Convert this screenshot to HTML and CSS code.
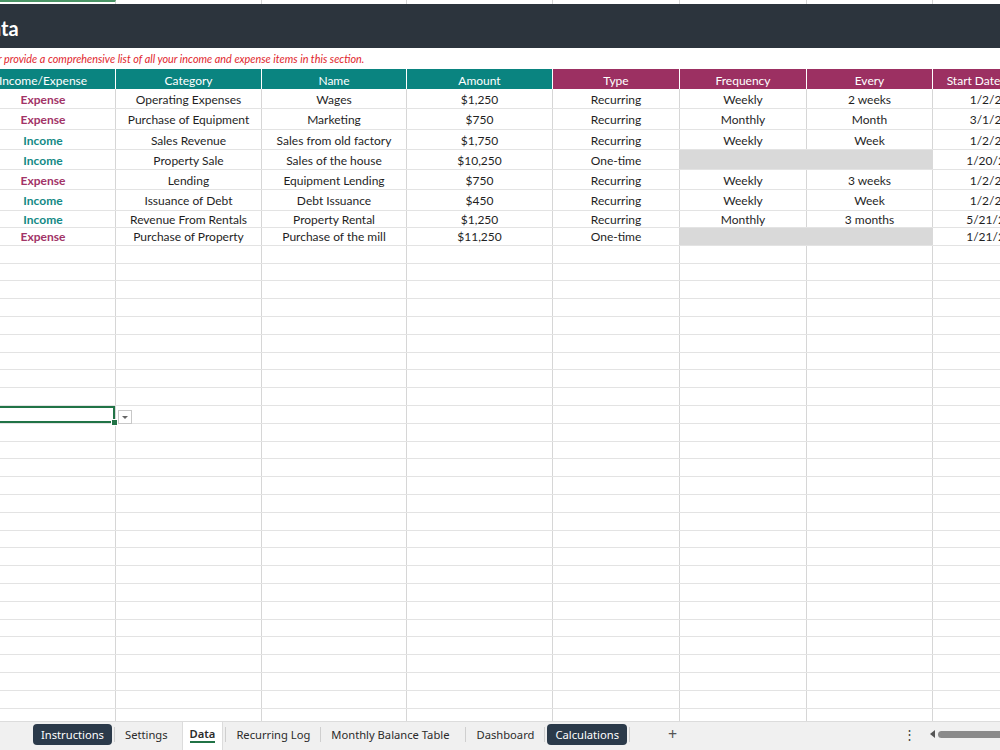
FILE: index.html
```html
<!DOCTYPE html>
<html lang="en">
<head>
  <meta charset="UTF-8" />
  <title>Data | Income &amp; Expense Tracker</title>
  <link rel="stylesheet" href="styles.css">
</head>
<body>
  <div class="sheet">
    <div class="row strip">
      <div class="cell picked"></div><div class="cell"></div><div class="cell"></div><div class="cell"></div>
      <div class="cell"></div><div class="cell"></div><div class="cell"></div><div class="cell"></div>
    </div>

    <div class="banner"><span class="title">Data</span></div>

    <div class="note">Enter or provide a comprehensive list of all your income and expense items in this section.</div>

    <div class="row head">
      <div class="cell teal">Income/Expense</div>
      <div class="cell teal">Category</div>
      <div class="cell teal">Name</div>
      <div class="cell teal">Amount</div>
      <div class="cell plum">Type</div>
      <div class="cell plum">Frequency</div>
      <div class="cell plum">Every</div>
      <div class="cell plum">Start Date of Entry</div>
    </div>

    <div class="row item">
      <div class="cell expense">Expense</div><div class="cell">Operating Expenses</div><div class="cell">Wages</div><div class="cell">$1,250</div>
      <div class="cell">Recurring</div><div class="cell">Weekly</div><div class="cell">2 weeks</div><div class="cell">1/2/2024</div>
    </div>
    <div class="row item">
      <div class="cell expense">Expense</div><div class="cell">Purchase of Equipment</div><div class="cell">Marketing</div><div class="cell">$750</div>
      <div class="cell">Recurring</div><div class="cell">Monthly</div><div class="cell">Month</div><div class="cell">3/1/2024</div>
    </div>
    <div class="row item">
      <div class="cell income">Income</div><div class="cell">Sales Revenue</div><div class="cell">Sales from old factory</div><div class="cell">$1,750</div>
      <div class="cell">Recurring</div><div class="cell">Weekly</div><div class="cell">Week</div><div class="cell">1/2/2024</div>
    </div>
    <div class="row item">
      <div class="cell income">Income</div><div class="cell">Property Sale</div><div class="cell">Sales of the house</div><div class="cell">$10,250</div>
      <div class="cell">One-time</div><div class="cell blank"></div><div class="cell blank"></div><div class="cell">1/20/2024</div>
    </div>
    <div class="row item">
      <div class="cell expense">Expense</div><div class="cell">Lending</div><div class="cell">Equipment Lending</div><div class="cell">$750</div>
      <div class="cell">Recurring</div><div class="cell">Weekly</div><div class="cell">3 weeks</div><div class="cell">1/2/2024</div>
    </div>
    <div class="row item">
      <div class="cell income">Income</div><div class="cell">Issuance of Debt</div><div class="cell">Debt Issuance</div><div class="cell">$450</div>
      <div class="cell">Recurring</div><div class="cell">Weekly</div><div class="cell">Week</div><div class="cell">1/2/2024</div>
    </div>
    <div class="row item short">
      <div class="cell income">Income</div><div class="cell">Revenue From Rentals</div><div class="cell">Property Rental</div><div class="cell">$1,250</div>
      <div class="cell">Recurring</div><div class="cell">Monthly</div><div class="cell">3 months</div><div class="cell">5/21/2024</div>
    </div>
    <div class="row item short">
      <div class="cell expense">Expense</div><div class="cell">Purchase of Property</div><div class="cell">Purchase of the mill</div><div class="cell">$11,250</div>
      <div class="cell">One-time</div><div class="cell blank"></div><div class="cell blank"></div><div class="cell">1/21/2024</div>
    </div>

    <div id="emptyRows"></div>
  </div>

  <div class="tabbar">
    <div class="tab dark">Instructions</div>
    <span class="sep"></span>
    <div class="tab">Settings</div>
    <div class="tab active"><span>Data</span></div>
    <span class="sep"></span>
    <div class="tab">Recurring Log</div>
    <span class="sep"></span>
    <div class="tab long">Monthly Balance Table</div>
    <span class="sep"></span>
    <div class="tab">Dashboard</div>
    <span class="sep"></span>
    <div class="tab dark">Calculations</div>
    <span class="sep"></span>
    <div class="add">+</div>
    <div class="scroll">
      <span class="more">&#8942;</span>
      <span class="arrow"></span>
      <span class="thumb"></span>
    </div>
  </div>

  <script>
    const holder = document.getElementById('emptyRows');
    for (let i = 0; i < 28; i++) {
      const row = document.createElement('div');
      row.className = 'row empty';
      for (let c = 0; c < 8; c++) {
        const cell = document.createElement('div');
        cell.className = 'cell';
        if (i === 9 && c === 0) {
          cell.className = 'cell selected';
          cell.innerHTML = '<span class="handle"></span><span class="drop"></span>';
        }
        row.appendChild(cell);
      }
      holder.appendChild(row);
    }
  </script>
</body>
</html>
```

FILE: styles.css
```css
html, body {
  margin: 0;
  height: 100%;
  overflow: hidden;
}

body {
  display: flex;
  flex-direction: column;
  background-color: #fff;
  color: #1f1f1f;
  font-family: Lato, "Liberation Sans", sans-serif;
}

.sheet {
  flex: 1;
  overflow: hidden;
  margin-left: -29px;
}

.row {
  display: grid;
  grid-template-columns: 145px 146px 145px 146px 127px 127px 126px 127px;
  border-bottom: 1px solid #e3e3e3;
  box-sizing: border-box;
}

.cell {
  border-right: 1px solid #d6d6d6;
  text-align: center;
  white-space: nowrap;
  overflow: hidden;
  font-size: 12px;
  position: relative;
}

.strip {
  height: 4px;
  border-bottom: none;
  background-color: #fff;
}

.strip .picked {
  border-top: 2px solid #4a9466;
}

.banner {
  height: 44px;
  background-color: #2c343d;
  display: flex;
  align-items: center;
}

.title {
  color: #fff;
  font-weight: 700;
  font-size: 20px;
  padding-left: 5px;
  padding-top: 3px;
}

.note {
  height: 21px;
  line-height: 21px;
  text-indent: -5px;
  color: #e1262d;
  font-size: 10.85px;
  font-style: italic;
  white-space: nowrap;
}

.head {
  height: 20px;
  line-height: 23px;
  border-bottom: none;
}

.head .cell {
  color: #fff;
  border-right: 1px solid #fff;
}

.teal {
  background-color: #0a8480;
}

.plum {
  background-color: #9c3062;
}

.item {
  height: 20.3px;
  line-height: 22px;
}

.item.short {
  height: 17.5px;
  line-height: 18.5px;
}

.expense {
  color: #a23467;
  font-weight: 700;
}

.income {
  color: #138985;
  font-weight: 700;
}

.blank {
  background-color: #d9d9d9;
  border-right-color: #d9d9d9;
}

.empty {
  height: 17.8px;
}

.selected {
  overflow: visible;
  box-shadow: inset 0 0 0 2px #217346;
}

.handle {
  position: absolute;
  right: -3px;
  bottom: -3px;
  width: 5px;
  height: 5px;
  background-color: #217346;
  border: 1px solid #fff;
  z-index: 2;
}

.drop {
  position: absolute;
  left: 147px;
  top: 4px;
  width: 14px;
  height: 14px;
  background-color: #fff;
  border: 1px solid #c8c8c8;
  box-sizing: border-box;
  z-index: 2;
}

.drop::after {
  content: "";
  position: absolute;
  left: 3px;
  top: 5px;
  border-left: 3px solid transparent;
  border-right: 3px solid transparent;
  border-top: 3px solid #666;
}

/* sheet tabs */
.tabbar {
  height: 29px;
  flex-shrink: 0;
  display: flex;
  align-items: center;
  background-color: #f0f0f0;
  border-top: 1px solid #dcdcdc;
  box-sizing: border-box;
  padding-left: 33px;
  padding-bottom: 4px;
  font-family: "Noto Sans", "Open Sans", sans-serif;
  font-size: 11.2px;
  color: #2b2b2b;
}

.tab {
  padding: 0 8px;
  height: 21px;
  line-height: 21px;
  white-space: nowrap;
}

.tab.long {
  padding-right: 14px;
}

.tab.dark {
  background-color: #2b3a4a;
  color: #fff;
  border-radius: 4px;
}

.tab.active {
  align-self: stretch;
  height: auto;
  background-color: #fff;
  display: flex;
  align-items: center;
  padding: 0 7px 4px;
  margin: 0 0 -4px 6px;
  border-left: 1px solid #dcdcdc;
  border-right: 1px solid #dcdcdc;
  font-weight: 600;
}

.tab.active span {
  border-bottom: 2px solid #217346;
  line-height: 15px;
}

.sep {
  width: 1px;
  height: 15px;
  background-color: #cfcfcf;
  margin: 0 2px;
}

.add {
  margin-left: 36px;
  font-size: 16px;
  color: #555;
}

.scroll {
  margin-left: auto;
  display: flex;
  align-items: center;
}

.more {
  font-size: 13px;
  color: #444;
  margin-right: 14px;
}

.arrow {
  width: 0;
  height: 0;
  border-top: 4px solid transparent;
  border-bottom: 4px solid transparent;
  border-right: 5px solid #555;
  margin-right: 3px;
}

.thumb {
  width: 62px;
  height: 7px;
  border-radius: 4px 0 0 4px;
  background-color: #8a8a8a;
}
```
